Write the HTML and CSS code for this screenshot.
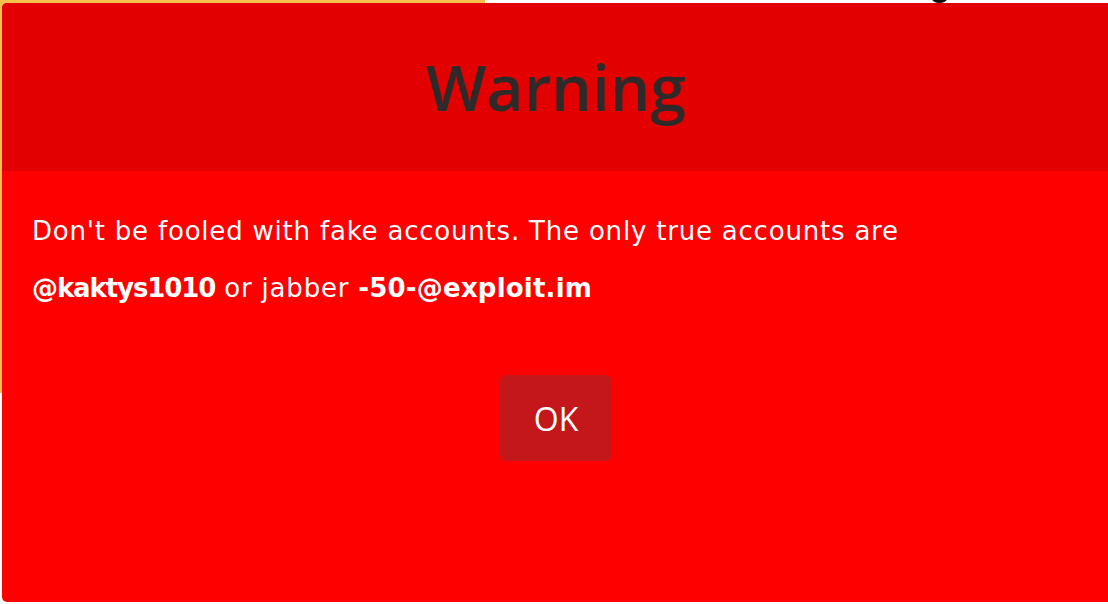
FILE: index.html
```html
<!DOCTYPE html>
<html lang="en">
<head>
<meta charset="utf-8">
<title>Warning</title>
<link rel="stylesheet" href="styles.css">
</head>
<body>
<div class="page">
  <div class="backdrop-banner"></div>
  <div class="backdrop-mark"></div>
  <div class="modal">
    <header class="modal-header">
      <h1 class="modal-title">Warning</h1>
    </header>
    <div class="modal-body">
      <p class="modal-text">Don't be fooled with fake accounts. The only true accounts are<br><strong class="handle">@kaktys1010</strong> or jabber <strong class="jid">-50-@exploit.im</strong></p>
    </div>
    <div class="modal-footer">
      <button class="btn-ok" type="button">OK</button>
    </div>
  </div>
</div>
</body>
</html>
```

FILE: styles.css
```css
* { box-sizing: border-box; }
html, body { margin: 0; padding: 0; }
body {
  background: #ffffff;
  font-family: "Open Sans", "Noto Sans", sans-serif;
  overflow: hidden;
}
.page {
  position: relative;
  width: 1108px;
  height: 604px;
  overflow: hidden;
}
.backdrop-banner {
  width: 485px;
  height: 393px;
  background: #f6c14b;
}
.backdrop-mark {
  position: absolute;
  left: 932px;
  top: -6px;
  width: 15px;
  height: 9px;
  border-radius: 50%;
  background: #111;
}
.modal {
  position: absolute;
  left: 2px;
  top: 3px;
  width: 1130px;
  height: 599px;
  background: #ff0000;
  border-radius: 5px;
  overflow: hidden;
  display: flex;
  flex-direction: column;
}
.modal-header {
  height: 168px;
  background: #e20000;
  display: flex;
  align-items: center;
  justify-content: center;
  padding-right: 22px;
}
.modal-title {
  margin: 0;
  font-size: 64px;
  font-weight: 600;
  color: #2e2a2a;
  line-height: 1;
}
.modal-body {
  padding: 32px 30px 0;
}
.modal-text {
  margin: 0;
  color: #ffffff;
  font-family: "DejaVu Sans", "Open Sans", sans-serif;
  font-size: 26px;
  letter-spacing: 0.8px;
  line-height: 57px;
  font-weight: 400;
}
.modal-text strong { font-weight: 700; }
.modal-text .handle { letter-spacing: -1.1px; }
.modal-text .jid { letter-spacing: 0.2px; }
.modal-footer {
  display: flex;
  justify-content: center;
  padding-top: 58px;
  padding-right: 22px;
}
.btn-ok {
  width: 112px;
  height: 86px;
  border: none;
  border-radius: 6px;
  background: #c4171b;
  color: #ffffff;
  font-family: inherit;
  font-size: 32px;
  font-weight: 400;
}
```
